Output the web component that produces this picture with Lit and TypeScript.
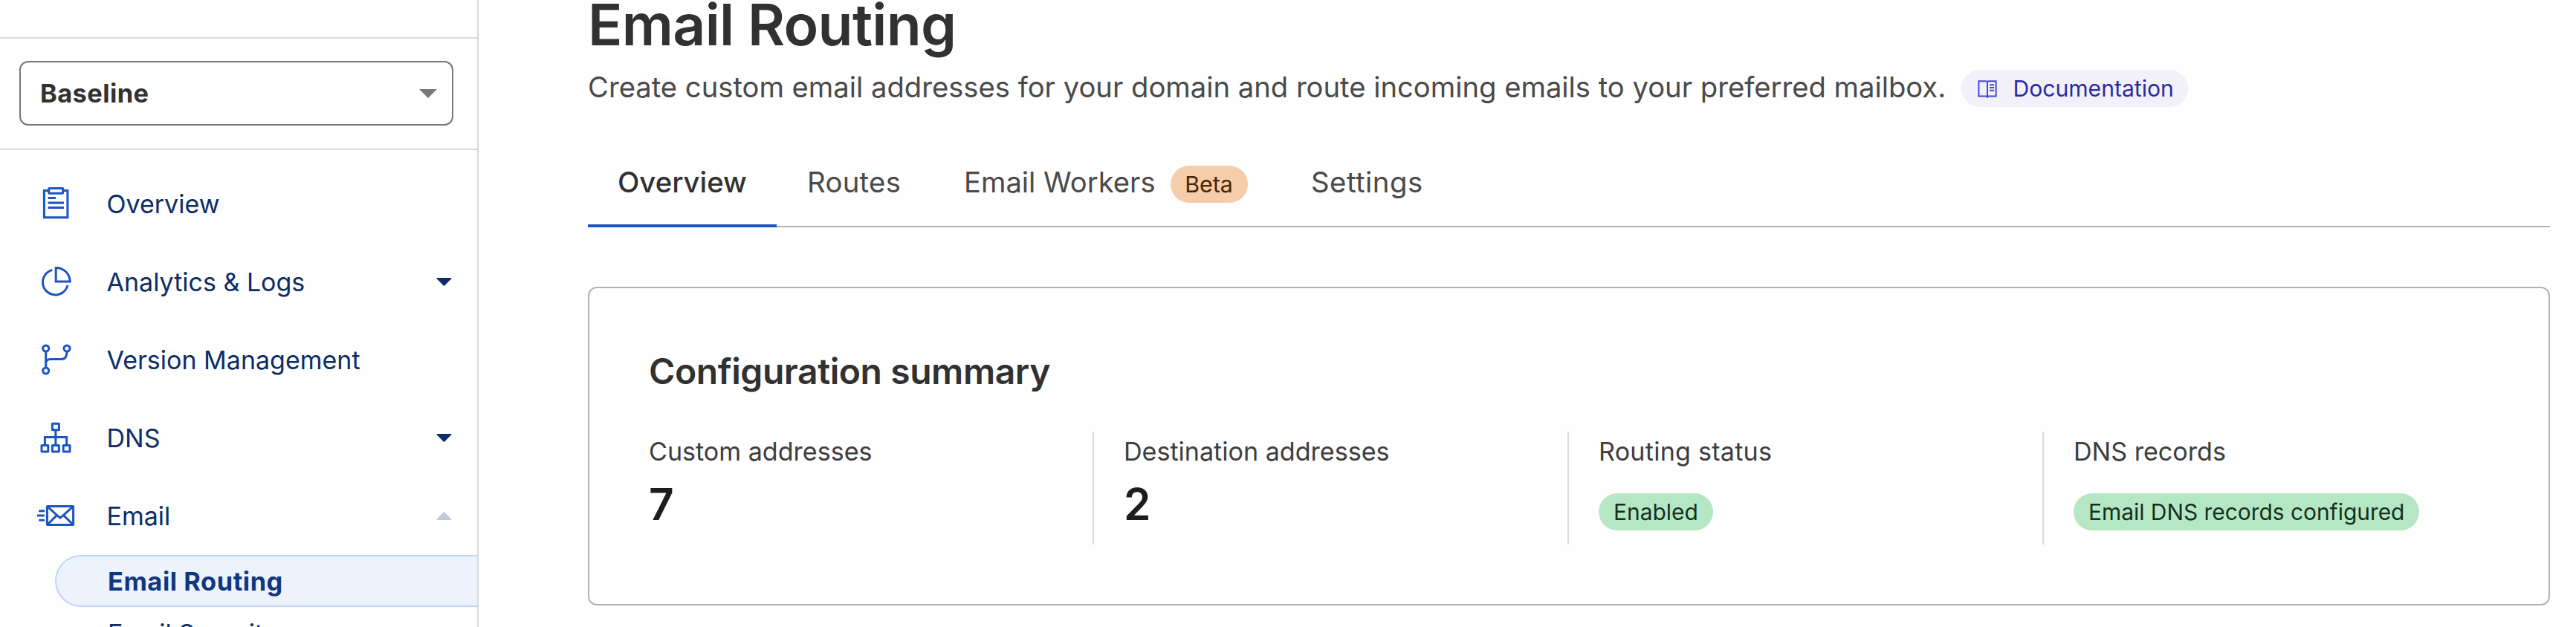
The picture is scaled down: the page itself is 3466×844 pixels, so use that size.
import { LitElement, html, svg, css, nothing } from "lit";
import { customElement } from "lit/decorators.js";
import { classMap } from "lit/directives/class-map.js";

const icons = {
  clipboard: svg`
    <path d="M15.7 6.4H9.4V42.7H40.9V6.4H34.7" />
    <rect x="15.7" y="3.4" width="19" height="6.8" rx="0.6" />
    <path d="M14.6 16.5H25M14.6 23H36M14.6 29.6H36" />`,
  pie: svg`
    <path d="M20.3 8.4A17 17 0 1 0 41 29" />
    <path d="M25.2 5.4A18.8 18.8 0 0 1 44.2 24H25.2Z" />`,
  branch: svg`
    <circle cx="11.7" cy="9" r="4" /><circle cx="40" cy="9" r="4" /><circle cx="11.7" cy="39" r="4" />
    <path d="M11.7 13V35M11.7 29C11.7 25.4 14 23.4 18 23.4H33C37.5 23.4 40 20.5 40 13" />`,
  tree: svg`
    <rect x="20.4" y="5.2" width="9" height="8.6" rx="0.4" />
    <rect x="6" y="34.4" width="8.8" height="8.6" rx="0.4" />
    <rect x="20.4" y="34.4" width="9" height="8.6" rx="0.4" />
    <rect x="35.2" y="34.4" width="8.8" height="8.6" rx="0.4" />
    <path d="M24.9 14V34M10.4 34V23.4H39.6V34" />`,
  mail: svg`
    <rect x="13.4" y="11.4" width="35.2" height="25" rx="0.4" />
    <path d="M14 12L27.6 24.4L31 27L34.4 24.4L48 12M14 36L26.4 23.6M48 36L35.6 23.6" />
    <path d="M2.3 17.7H10M0 24H9.8M2.3 30.2H10" />`,
};

interface NavItem {
  label: string;
  icon: keyof typeof icons;
  caret?: "down" | "up";
}

const nav: NavItem[] = [
  { label: "Overview", icon: "clipboard" },
  { label: "Analytics & Logs", icon: "pie", caret: "down" },
  { label: "Version Management", icon: "branch" },
  { label: "DNS", icon: "tree", caret: "down" },
  { label: "Email", icon: "mail", caret: "up" },
];

@customElement("side-nav")
class SideNav extends LitElement {
  static styles = css`
    :host { display: block; box-sizing: border-box; width: 644px; flex: none; border-right: 2px solid #d9d9d9; color: #0d2d66; font-size: 34px; }
    .top { height: 50px; border-bottom: 2px solid #d9d9d9; }
    .account { padding: 30px 32px 31px 26px; border-bottom: 2px solid #d9d9d9; }
    .select { box-sizing: border-box; height: 87px; border: 2px solid #767676; border-radius: 12px; padding: 0 20px 0 26px; display: flex; align-items: center; justify-content: space-between; color: #313131; font-weight: 700; font-size: 34.4px; letter-spacing: 0.42px; }
    .select svg { width: 24px; height: 12px; fill: #76787e; }
    nav { padding-top: 20px; }
    .item { height: 105px; display: flex; align-items: center; padding: 0 34px 0 50px; }
    .icon { width: 50px; height: 49px; flex: none; overflow: visible; fill: none; stroke: #1b55c2; stroke-width: 3; margin-right: 43.5px; }
    .label { flex: 1; white-space: nowrap; }
    .caret { width: 21px; height: 11px; fill: #0d2d66; }
    .caret.up { fill: #c1c9d7; transform: rotate(180deg); }
    .sub { box-sizing: border-box; height: 70px; line-height: 70px; padding-left: 145px; white-space: nowrap; }
    .sub.active { margin-left: 74px; padding-left: 69px; line-height: 67px; border: 2px solid #bdd5fa; border-right: 0; border-radius: 35px 0 0 35px; background: #ecf3fd; color: #10377e; font-weight: 700; font-size: 34.4px; letter-spacing: 0.55px; }
    .sub.next { margin-top: 1px; }
  `;

  render() {
    return html`
      <div class="top"></div>
      <div class="account">
        <div class="select">
          <span>Baseline</span>
          <svg viewBox="0 0 24 12"><path d="M0 0H24L12 12Z" /></svg>
        </div>
      </div>
      <nav>
        ${nav.map(
          (n) => html`<div class="item">
            <svg class="icon" viewBox="0 0 50 49">${icons[n.icon]}</svg>
            <span class="label">${n.label}</span>
            ${n.caret
              ? html`<svg class=${classMap({ caret: true, up: n.caret === "up" })} viewBox="0 0 21 11"><path d="M1 0H20Q21 .6 20.3 1.3L11.2 10.5Q10.5 11 9.8 10.5L.7 1.3Q0 .6 1 0Z" /></svg>`
              : nothing}
          </div>`
        )}
        <div class="sub active">Email Routing</div>
        <div class="sub next">Email Security</div>
      </nav>
    `;
  }
}

@customElement("summary-card")
class SummaryCard extends LitElement {
  static styles = css`
    :host { display: block; box-sizing: border-box; height: 429px; border: 2px solid #b3b3b3; border-radius: 12px; padding: 82px 40px 0; }
    h2 { margin: 0 40px 51px; font-size: 48px; line-height: 60px; font-weight: 600; letter-spacing: -0.43px; color: #313131; }
    .grid { display: grid; grid-template-columns: repeat(4, 1fr); height: 152px; }
    .col { padding-left: 40px; border-right: 2px solid #d9d9d9; white-space: nowrap; }
    .col:last-child { border-right-color: transparent; }
    .label { font-size: 34.1px; line-height: 54px; color: #3d3d3d; }
    .label.wide { letter-spacing: 0.25px; }
    .value { margin-top: 12px; font-size: 58.5px; line-height: 64px; font-weight: 600; color: #1d1d1d; }
    .pill { display: inline-block; margin-top: 29px; height: 50px; line-height: 50px; border-radius: 25px; padding: 0 20px; background: #b6e7c4; color: #14301e; font-size: 29.9px; }
  `;

  render() {
    return html`
      <h2>Configuration summary</h2>
      <div class="grid">
        <div class="col"><div class="label">Custom addresses</div><div class="value">7</div></div>
        <div class="col"><div class="label">Destination addresses</div><div class="value">2</div></div>
        <div class="col"><div class="label wide">Routing status</div><span class="pill">Enabled</span></div>
        <div class="col"><div class="label">DNS records</div><span class="pill">Email DNS records configured</span></div>
      </div>
    `;
  }
}

@customElement("app-root")
class AppRoot extends LitElement {
  static styles = css`
    :host { display: flex; height: 844px; overflow: hidden; background: #fefefe; font-family: Inter, "Liberation Sans", sans-serif; }
    main { flex: 1; padding: 0 35px 0 147px; }
    h1 { margin: 0 0 26px; font-size: 76.8px; line-height: 68px; font-weight: 600; letter-spacing: -0.7px; color: #313131; white-space: nowrap; }
    .intro { display: flex; align-items: flex-start; height: 50px; }
    .desc { width: 1848px; font-size: 38.2px; line-height: 47px; color: #4a4a4a; white-space: nowrap; }
    .docs { box-sizing: border-box; width: 305px; height: 50px; border-radius: 25px; background: #f2f0fb; color: #2b2b9f; display: flex; align-items: center; padding-left: 22px; font-size: 30.1px; line-height: 50px; }
    .docs svg { width: 26px; height: 26px; margin-right: 21.5px; fill: none; stroke: #4543dc; stroke-width: 2; }
    .tabs { box-sizing: border-box; display: flex; height: 162px; border-bottom: 2px solid #b3b3b3; margin-bottom: 80px; font-size: 38.3px; color: #4a4a4a; }
    .tab { box-sizing: border-box; height: 162px; padding: 76px 0 0 40px; line-height: 50px; display: flex; white-space: nowrap; }
    .overview { width: 254px; border-bottom: 4px solid #1b55c2; color: #313131; font-weight: 500; }
    .routes { width: 212px; padding-left: 41px; letter-spacing: 0.3px; }
    .workers { width: 467px; font-size: 38.2px; }
    .settings { letter-spacing: 0.5px; }
    .beta { margin: 3px 0 0 20px; height: 50px; width: 104px; text-align: center; border-radius: 25px; background: #f5cdaa; color: #482404; font-size: 30.4px; }
  `;

  render() {
    return html`
      <side-nav></side-nav>
      <main>
        <h1>Email Routing</h1>
        <div class="intro">
          <div class="desc">Create custom email addresses for your domain and route incoming emails to your preferred mailbox.</div>
          <div class="docs">
            <svg viewBox="0 0 26 26">
              <path d="M13 4.4L11.4 3.2H1.4V23.4H11.6L13 24.6L14.4 23.4H24.6V3.2H14.6Z" />
              <path d="M13 4.4V25.4M16 8.2H22M16 12H22M16 15.8H22" />
            </svg>
            <span>Documentation</span>
          </div>
        </div>
        <div class="tabs">
          <div class="tab overview">Overview</div>
          <div class="tab routes">Routes</div>
          <div class="tab workers">Email Workers<span class="beta">Beta</span></div>
          <div class="tab settings">Settings</div>
        </div>
        <summary-card></summary-card>
      </main>
    `;
  }
}
